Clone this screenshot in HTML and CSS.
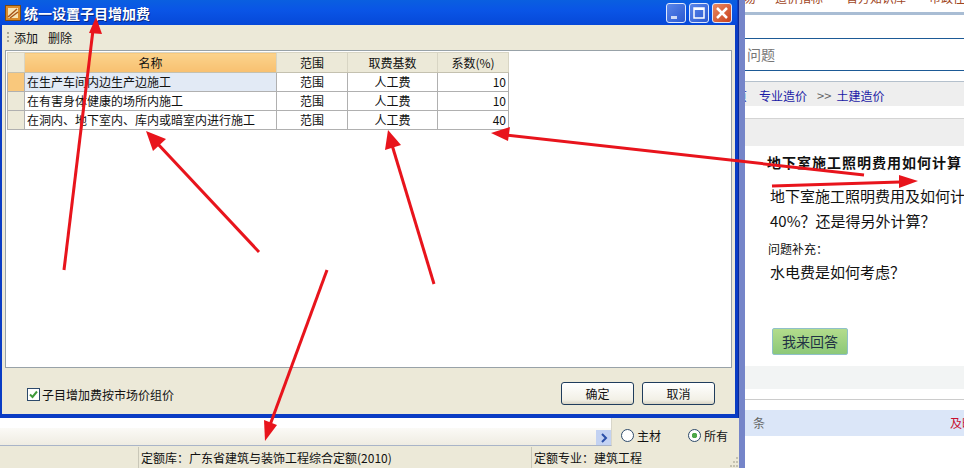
FILE: index.html
```html
<!DOCTYPE html>
<html>
<head>
  <title>统一设置子目增加费</title>
  <link rel="stylesheet" href="styles.css">
</head>
<body>
  <div class="desktop">

    <!-- app window behind the dialog -->
    <div class="app">
      <div class="app-top"></div>
      <div class="app-strip">
        <div class="strip-left"><span class="scroll-btn"><svg width="10" height="10" viewBox="0 0 10 10"><path d="M3 1l4 4-4 4" fill="none" stroke="#2a4fa8" stroke-width="2"/></svg></span></div>
        <div class="strip-right">
          <span class="radio"></span><span class="radio-label">主材</span>
          <span class="radio on"></span><span class="radio-label">所有</span>
        </div>
      </div>
      <div class="status">
        <div class="status-cell w1"></div>
        <div class="status-cell w2">定额库：广东省建筑与装饰工程综合定额(2010)</div>
        <div class="status-cell w3">定额专业：建筑工程</div>
        <svg class="size-grip" width="10" height="12" viewBox="0 0 10 12"><path d="M7 1h2v2H7zM4 5h2v2H4zM7 5h2v2H7zM1 9h2v2H1zM4 9h2v2H4zM7 9h2v2H7z" fill="#c4c1b0"/></svg>
      </div>
    </div>

    <!-- web page behind, on the right -->
    <div class="web">
      <div class="web-nav"><span>易</span><span>造价指标</span><span>官方知识库</span><span>市政往</span></div>
      <div class="web-gap1"></div>
      <div class="web-heading">问题</div>
      <div class="web-gap2"></div>
      <div class="web-crumb">
        <span class="crumb-cut">页</span><a>专业造价</a><span class="crumb-sep">&gt;&gt;</span><a>土建造价</a>
      </div>
      <div class="web-band"></div>
      <div class="web-body">
        <div class="q-title">地下室施工照明费用如何计算</div>
        <div class="q-text">地下室施工照明费用及如何计算</div>
        <div class="q-text">40%？还是得另外计算？</div>
        <div class="q-extra">问题补充：</div>
        <div class="q-text">水电费是如何考虑？</div>
        <div class="answer-btn">我来回答</div>
      </div>
      <div class="web-band2"></div>
      <div class="web-row"><span>条</span><span class="red">及时</span></div>
    </div>

    <!-- dialog -->
    <div class="dialog">
      <div class="titlebar">
        <svg class="title-icon" width="16" height="16" viewBox="0 0 16 16">
          <rect x="0.5" y="0.5" width="15" height="15" fill="#d98a2b" stroke="#7a4a12"/>
          <rect x="3" y="3" width="10" height="10" fill="#f6e3b4"/>
          <path d="M3 12l9-8M5 13l8-6" stroke="#a8551a" stroke-width="1.5"/>
        </svg>
        <span class="title-text">统一设置子目增加费</span>
        <div class="win-btns">
          <span class="win-btn"><svg width="20" height="20" viewBox="0 0 20 20"><rect x="5" y="13" width="6" height="3" fill="#fff" opacity=".75"/></svg></span>
          <span class="win-btn"><svg width="20" height="20" viewBox="0 0 20 20"><path d="M5 5h10v10H5z" fill="none" stroke="#fff" stroke-width="1.5"/><path d="M5 6h10" stroke="#fff" stroke-width="2"/></svg></span>
          <span class="win-btn close"><svg width="20" height="20" viewBox="0 0 20 20"><path d="M5 5l10 10M15 5L5 15" stroke="#fff" stroke-width="2.5"/></svg></span>
        </div>
      </div>
      <div class="dialog-body">
        <div class="toolbar">
          <span class="grip"></span>
          <span class="tool">添加</span>
          <span class="tool">删除</span>
        </div>
        <div class="grid-panel">
          <table class="grid">
            <thead>
              <tr>
                <th class="c-num"></th>
                <th class="c-name active">名称</th>
                <th class="c-range">范围</th>
                <th class="c-base">取费基数</th>
                <th class="c-rate">系数(%)</th>
              </tr>
            </thead>
            <tbody>
              <tr class="current">
                <td class="num"></td>
                <td class="name">在生产车间内边生产边施工</td>
                <td>范围</td><td>人工费</td><td class="rate">10</td>
              </tr>
              <tr>
                <td class="num"></td>
                <td class="name">在有害身体健康的场所内施工</td>
                <td>范围</td><td>人工费</td><td class="rate">10</td>
              </tr>
              <tr>
                <td class="num"></td>
                <td class="name">在洞内、地下室内、库内或暗室内进行施工</td>
                <td>范围</td><td>人工费</td><td class="rate">40</td>
              </tr>
            </tbody>
          </table>
        </div>
        <div class="dialog-foot">
          <span class="check"><svg width="11" height="11" viewBox="0 0 11 11"><path d="M2 5.5l2.5 2.5L9 2.5" fill="none" stroke="#3f9a3a" stroke-width="2"/></svg></span>
          <span class="check-label">子目增加费按市场价组价</span>
          <span class="btn first">确定</span>
          <span class="btn">取消</span>
        </div>
      </div>
    </div>

    <!-- red annotation arrows -->
    <svg class="arrows" width="964" height="468" viewBox="0 0 964 468">
      <g stroke="#e8141c" stroke-width="3" fill="#e8141c">
        <line x1="64" y1="270" x2="93" y2="30"/>
        <line x1="259" y1="252" x2="156" y2="142"/>
        <line x1="434" y1="284" x2="392" y2="145"/>
        <line x1="864" y1="175" x2="505" y2="135"/>
        <line x1="772" y1="186" x2="900" y2="182"/>
        <line x1="327" y1="270" x2="270" y2="425"/>
      </g>
      <g fill="#e8141c">
        <polygon points="96,17 89,33 102,34"/>
        <polygon points="146,131 153,151 166,139"/>
        <polygon points="388,130 385,150 401,145"/>
        <polygon points="491,133 510,127 508,141"/>
        <polygon points="918,181 899,175 899,188"/>
        <polygon points="265,441 264,420 277,425"/>
      </g>
    </svg>
  </div>
</body>
</html>
```
FILE: styles.css
```css
html, body {
  margin: 0;
  padding: 0;
}

body {
  font-family: "Noto Sans CJK SC", "Liberation Sans", sans-serif;
  font-size: 12px;
  color: #111;
  background: #fff;
  overflow: hidden;
}

.desktop {
  position: relative;
  width: 964px;
  height: 468px;
  overflow: hidden;
}

/* app behind */
.app {
  position: absolute;
  left: 0;
  top: 0;
  width: 745px;
  height: 468px;
  display: flex;
  flex-direction: column;
  background: #fff;
  border-right: 6px solid #7585c9;
  box-sizing: border-box;
}

.app-top {
  height: 418px;
  flex: none;
}

.app-strip {
  height: 28px;
  flex: none;
  display: flex;
}

.strip-left {
  flex: 0 0 612px;
  display: flex;
  justify-content: flex-end;
  align-items: flex-end;
  background: linear-gradient(#fff 0 10px, #fbfaf6 10px, #efece2);
  border-right: 1px solid #d8d6ca;
  border-bottom: 1px solid #a9b4c8;
  box-sizing: border-box;
}

.scroll-btn {
  width: 15px;
  height: 15px;
  display: flex;
  align-items: center;
  justify-content: center;
  background: #c3d2f2;
}

.strip-right {
  flex: 1;
  display: flex;
  align-items: center;
  background: #ece9d8;
  padding: 6px 0 0 9px;
  box-sizing: border-box;
}

.radio {
  width: 11px;
  height: 11px;
  border: 1px solid #2d4a6b;
  border-radius: 50%;
  background: #fff;
  flex: none;
}

.radio.on {
  margin-left: 27px;
  background: radial-gradient(circle, #4ea84a 0 2.5px, #fff 3px);
}

.radio-label {
  margin-left: 3px;
}

.status {
  flex: 1;
  display: flex;
  background: #ece9d8;
  gap: 2px;
  padding-top: 1px;
}

.status-cell {
  line-height: 21px;
  padding-left: 2px;
  box-sizing: border-box;
  border-left: 1px solid #c9c7b8;
  white-space: nowrap;
  overflow: hidden;
}

.w1 { width: 136px; border-left: 0; }
.w2 { width: 391px; }
.w3 { flex: 1; }

.size-grip {
  flex: none;
  align-self: flex-end;
}

/* web page behind */
.web {
  position: absolute;
  left: 745px;
  top: 0;
  width: 219px;
  height: 468px;
  display: flex;
  flex-direction: column;
  background: #fff;
  overflow: hidden;
}

.web-nav {
  height: 12px;
  flex: none;
  display: flex;
  gap: 23px;
  margin-top: -11px;
  padding-bottom: 11px;
  line-height: 18px;
  color: #a0461e;
  white-space: nowrap;
  border-bottom: 3px solid #a9bdd4;
  overflow: hidden;
}

.web-nav span:first-child {
  margin: 0 -4px 0 -1px;
}

.web-gap1 {
  height: 23px;
  flex: none;
}

.web-heading {
  height: 31px;
  flex: none;
  line-height: 31px;
  border-top: 1px solid #1d5a96;
  border-bottom: 1px solid #1d5a96;
  color: #777;
  font-size: 14px;
  padding-left: 2px;
}

.web-gap2 {
  height: 10px;
  flex: none;
  border-bottom: 1px solid #b4c0cc;
}

.web-crumb {
  height: 24px;
  flex: none;
  line-height: 27px;
  background: #eee;
  color: #1a1aa6;
  display: flex;
  white-space: nowrap;
  overflow: hidden;
}

.crumb-cut {
  margin-left: -10px;
  width: 24px;
}

.crumb-sep {
  color: #666;
  margin: 0 5px 0 10px;
  font-size: 13px;
}

.web-band {
  margin-top: 12px;
  height: 28px;
  flex: none;
  background: #eee;
  border-top: 1px solid #d4d4d4;
  box-sizing: border-box;
}

.web-body {
  height: 220px;
  flex: none;
  padding: 7px 0 0 26px;
  font-size: 15px;
  white-space: nowrap;
  box-sizing: border-box;
  margin-left: -1px;
}

.q-title {
  font-weight: bold;
  font-size: 14px;
  letter-spacing: 1px;
  line-height: 18px;
  margin: 0 0 12px -3px;
}

.q-text {
  line-height: 25px;
}

.q-extra {
  font-size: 12px;
  line-height: 20px;
  margin: 6px 0 0 -2px;
}

.answer-btn {
  width: 74px;
  height: 25px;
  margin: 44px 0 0 2px;
  line-height: 25px;
  font-size: 14px;
  text-align: center;
  background: linear-gradient(#b3dc8c, #8cc878);
  border: 1px solid #8fc0c9;
  border-radius: 2px;
  color: #234;
}

.web-band2 {
  height: 34px;
  flex: none;
  background: #f2f4f4;
  border-bottom: 1px solid #ccc;
  box-shadow: inset 0 -10px 0 #fff;
  box-sizing: border-box;
}

.web-row {
  margin: 10px -10px 0 0;
  height: 26px;
  flex: none;
  line-height: 26px;
  background: #dbe6f8;
  display: flex;
  justify-content: space-between;
  padding-left: 8px;
  color: #666;
}

.red {
  color: #c8102e;
}

/* dialog */
.dialog {
  position: absolute;
  left: 0;
  top: 0;
  width: 739px;
  height: 418px;
  box-sizing: border-box;
  display: flex;
  flex-direction: column;
  background: #0a3cc4;
  padding: 0 3px 4px 2px;
  border-right: 1px solid #0a2a9a;
}

.titlebar {
  height: 25px;
  flex: none;
  margin: 0 -2px;
  padding: 0 5px;
  display: flex;
  align-items: center;
  background: linear-gradient(#0a5fe0, #0a55e6 40%, #0648d8);
}

.title-icon {
  flex: none;
}

.title-text {
  margin-left: 3px;
  color: #fff;
  font-size: 14px;
  font-weight: bold;
  text-shadow: 1px 1px 0 #0a2a80;
}

.win-btns {
  margin-left: auto;
  display: flex;
  gap: 3px;
}

.win-btn {
  width: 20px;
  height: 20px;
  box-sizing: border-box;
  border: 1px solid #dfe8fb;
  border-radius: 3px;
  background: linear-gradient(135deg, #5a86ea, #2a58d0);
  overflow: hidden;
}

.win-btn svg {
  display: block;
  margin: -1px;
}

.win-btn.close {
  background: linear-gradient(135deg, #ea8a62, #c8401c);
}

.dialog-body {
  flex: 1;
  display: flex;
  flex-direction: column;
  background: #ece9d8;
  padding: 0 3px;
}

.toolbar {
  height: 25px;
  flex: none;
  display: flex;
  align-items: center;
  gap: 10px;
  padding-left: 2px;
}

.grip {
  width: 2px;
  height: 12px;
  margin-right: -5px;
  background: repeating-linear-gradient(#a8a695 0 2px, transparent 2px 4px);
}

.grid-panel {
  height: 318px;
  flex: none;
  background: #fff;
  border: 1px solid #98a2a8;
  box-sizing: border-box;
  padding: 1px;
}

.grid {
  border-collapse: collapse;
  table-layout: fixed;
  width: 501px;
}

.grid th,
.grid td {
  box-sizing: border-box;
  border: 1px solid #b0b0b0;
  height: 19px;
  padding: 0 2px;
  text-align: center;
  white-space: nowrap;
  font-weight: normal;
  overflow: hidden;
  line-height: 16px;
}

.grid th {
  height: 20px;
  background: #ece9d8;
  border-color: #d8d5c4;
  border-bottom-color: #c4c1b0;
}

.c-num { width: 17px; }
.c-name { width: 252px; }
.c-range { width: 71px; }
.c-base { width: 90px; }
.c-rate { width: 71px; }

.grid th.active {
  background: linear-gradient(#fbd38c, #f8c070);
}

.grid td.num {
  background: #ece9d8;
}

.grid td.name {
  text-align: left;
}

.grid td.rate {
  text-align: right;
}

.current td {
  background: #e2eaf5;
}

.current td:nth-child(n+3) {
  background: #fff;
}

.current td.num {
  background: #f9c87c;
}

.dialog-foot {
  flex: 1;
  display: flex;
  align-items: center;
  padding: 4px 17px 0 22px;
}

.check {
  width: 11px;
  height: 11px;
  flex: none;
  border: 1px solid #2d4a6b;
  background: #fff;
  display: block;
  line-height: 0;
  margin-top: 2px;
}

.check-label {
  margin: 2px 0 0 2px;
}

.btn {
  width: 73px;
  height: 23px;
  flex: none;
  box-sizing: border-box;
  line-height: 21px;
  text-align: center;
  border: 1px solid #1f3c5c;
  border-radius: 3px;
  background: linear-gradient(#fff, #f2f0e6 80%, #d8d4c4);
  margin-left: 8px;
}

.btn.first {
  margin-left: auto;
}

.arrows {
  position: absolute;
  left: 0;
  top: 0;
  pointer-events: none;
}
```
